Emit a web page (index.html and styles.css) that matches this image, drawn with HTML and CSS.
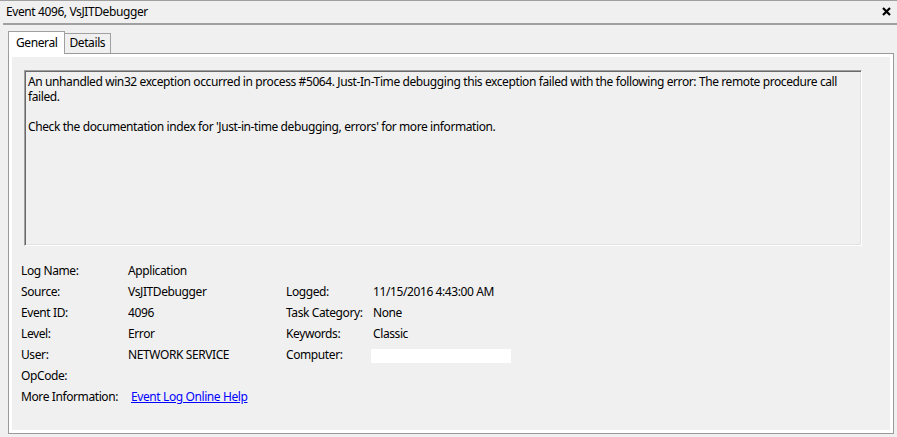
FILE: index.html
```html
<!DOCTYPE html>
<html>
<head>
<meta charset="utf-8">
<link rel="stylesheet" href="styles.css">
</head>
<body>
<div class="window">
  <div class="titlebar">
    <span class="title">Event 4096, VsJITDebugger</span>
    <svg class="close" width="9" height="9" viewBox="0 0 9 9"><path d="M1 1 L8 8 M8 1 L1 8" stroke="#000" stroke-width="2.2" fill="none"/></svg>
  </div>
  <div class="sep"></div>
  <div class="tabs-area">
    <div class="tabstrip">
      <div class="tab active">General</div>
      <div class="tab">Details</div>
    </div>
    <div class="panel">
      <div class="page">
        <div class="msgbox">
          <p class="msg"><span class="line">An unhandled win32 exception occurred in process #5064. Just-In-Time debugging this exception failed with the following error: The remote procedure call</span><span class="line">failed.</span></p>
          <p class="msg">Check the documentation index for 'Just-in-time debugging, errors' for more information.</p>
        </div>
        <div class="props">
          <div class="lbl">Log Name:</div><div class="val">Application</div><div></div><div></div>
          <div class="lbl">Source:</div><div class="val">VsJITDebugger</div><div class="lbl">Logged:</div><div class="val">11/15/2016 4:43:00 AM</div>
          <div class="lbl">Event ID:</div><div class="val">4096</div><div class="lbl">Task Category:</div><div class="val">None</div>
          <div class="lbl">Level:</div><div class="val">Error</div><div class="lbl">Keywords:</div><div class="val">Classic</div>
          <div class="lbl">User:</div><div class="val">NETWORK SERVICE</div><div class="lbl">Computer:</div><div class="val"><span class="redact"></span></div>
          <div class="lbl">OpCode:</div><div class="val"></div><div></div><div></div>
          <div class="lbl">More Information:</div><div class="val"><a class="link" href="#">Event Log Online Help</a></div><div></div><div></div>
        </div>
      </div>
    </div>
  </div>
</div>
</body>
</html>
```

FILE: styles.css
```css
html, body {
  margin: 0;
  padding: 0;
  background: #f0f0f0;
}
body {
  font-family: "Noto Sans", "Open Sans", sans-serif;
  font-size: 12px;
  letter-spacing: -0.4px;
  color: #000;
}
.window {
  width: 897px;
  height: 437px;
  box-sizing: border-box;
  border-top: 1px solid #a0a0a0;
  background: #f0f0f0;
  overflow: hidden;
}
.titlebar {
  height: 22px;
  display: flex;
  align-items: center;
  justify-content: space-between;
  padding: 0 6px 0 6px;
}
.title {
  line-height: 22px;
}
.close {
  display: block;
  margin-top: -1px;
}
.sep {
  height: 2px;
  margin-left: 3px;
  background: #a0a0a0;
}
.tabs-area {
  padding: 6px 4px 0 8px;
}
.tabstrip {
  display: flex;
  align-items: flex-end;
  height: 22px;
}
.tab {
  box-sizing: border-box;
  height: 20px;
  line-height: 18px;
  padding: 0 5px 0 4px;
  border: 1px solid #a0a0a0;
  border-bottom: none;
  border-left: none;
  background: #f0f0f0;
}
.tab.active {
  position: relative;
  z-index: 1;
  height: 23px;
  margin-bottom: -1px;
  line-height: 22px;
  padding: 0 7px 0 7px;
  border-left: 1px solid #a0a0a0;
  background: #fff;
}
.panel {
  box-sizing: border-box;
  width: 886px;
  height: 381px;
  border: 1px solid #9a9a9e;
  background: #fff;
  padding: 3px;
}
.page {
  height: 100%;
  background: #f0f0f0;
  padding: 13px 0 0 0;
  box-sizing: border-box;
}
.msgbox {
  box-sizing: border-box;
  width: 838px;
  height: 176px;
  margin-left: 12px;
  border-top: 1px solid #a0a0a0;
  border-left: 1px solid #a0a0a0;
  border-right: 1px solid #fff;
  border-bottom: 1px solid #fff;
  box-shadow: inset 1px 1px 0 #696969, inset -1px -1px 0 #e3e3e3;
  padding: 3px 3px 0 3px;
}
.msg {
  margin: 0 0 15px 0;
  line-height: 15px;
}
.line {
  display: block;
  white-space: nowrap;
}
.props {
  margin: 14px 0 0 9px;
  display: grid;
  grid-template-columns: 107px 158px 87px 200px;
  grid-auto-rows: 21px;
  line-height: 21px;
}
.redact {
  display: inline-block;
  width: 140px;
  height: 14px;
  background: #fff;
  margin-left: -2px;
  vertical-align: middle;
}
.link {
  color: #0000ff;
  text-decoration: underline;
  margin-left: 3px;
}
```
